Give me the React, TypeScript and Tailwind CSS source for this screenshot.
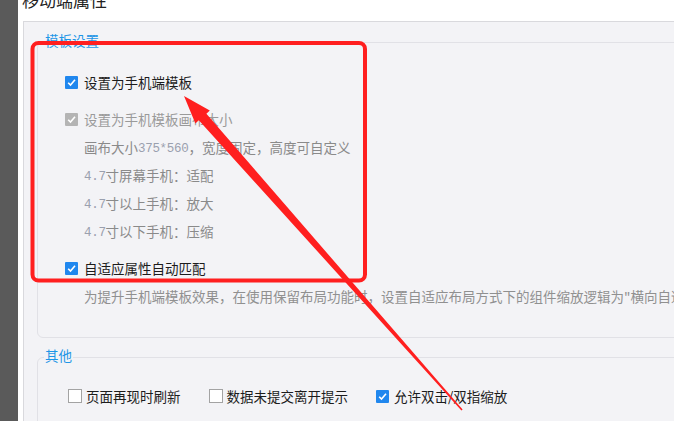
import React from 'react';

type BoxState = 'on' | 'off' | 'disabled';

function Box({ state }: { state: BoxState }) {
  if (state === 'off') {
    return <span className="w-[14px] h-[14px] border border-[#a3a3a3] bg-white shrink-0" />;
  }
  return (
    <span
      className={`w-[13px] h-[13px] rounded-[1px] flex items-center justify-center shrink-0 ${
        state === 'on' ? 'bg-[#2087ee]' : 'bg-[#b4b4b4]'
      }`}
    >
      <svg width="11" height="11" viewBox="0 0 11 11">
        <path d="M2.2 5.7 L4.5 8.1 L9 2.8" stroke="white" strokeWidth="1.6" fill="none" />
      </svg>
    </span>
  );
}

function CheckRow({ state, label, dim }: { state: BoxState; label: string; dim?: boolean }) {
  return (
    <div className="h-[28px] flex items-center gap-[6px]">
      <Box state={state} />
      <span className={dim ? 'text-[#9a9a9a]' : 'text-[#1c1c1c]'}>{label}</span>
    </div>
  );
}

// 数字部分是等宽字体
function Num({ children }: { children: React.ReactNode }) {
  return (
    <span className="relative top-[2px] font-['Liberation_Mono',monospace] text-[12.5px] tracking-[-0.3px] text-[#9aa0ae]">
      {children}
    </span>
  );
}

function SubLine({ children }: { children: React.ReactNode }) {
  return <div className="h-[28px] flex items-center pl-[19px] text-[#8a8a8a] whitespace-nowrap">{children}</div>;
}

// 红色标注框和箭头
function Annotation() {
  return (
    <svg className="absolute inset-0 pointer-events-none" width="674" height="421" viewBox="0 0 674 421">
      <rect x="32.5" y="43" width="332.5" height="237.5" rx="6" fill="none" stroke="#ff1f1f" strokeWidth="4" />
      <polygon
        points="184,96 209.8,110.6 206.4,113.8 462.6,409.5 461.4,410.5 198.8,120.2 195.4,123.4"
        fill="#ff1f1f"
      />
    </svg>
  );
}

export default function App() {
  return (
    <div className="relative w-[674px] h-[421px] overflow-hidden flex bg-white font-['Noto_Sans_CJK_SC','Noto_Sans',sans-serif] text-[13.5px]">
      <div className="w-[18px] shrink-0 bg-[#5a5a5a]" />
      <div className="flex-1 min-w-0 flex flex-col">
        <div className="h-[21px] pl-[4px] overflow-hidden shrink-0">
          <div className="-mt-[9px] text-[17px] leading-[17px] text-[#222]">移动端属性</div>
        </div>
        <div className="flex-1 flex pl-[5px]">
          <div className="flex-1 min-w-0 overflow-hidden border-l border-t border-[#d9d9dd] bg-[#f3f3f6] pl-[13px]">
            <fieldset className="w-[700px] mt-[9px] border border-[#e1e1e6] rounded-[6px] p-0 pb-[27px]">
              <legend className="ml-[6px] px-[1px] pb-[4px] leading-[18px] text-[#1e96e6]">模板设置</legend>
              <div className="pl-[27px] pt-[15px]">
                <CheckRow state="on" label="设置为手机端模板" />
                <div className="mt-[9px]">
                  <CheckRow state="disabled" label="设置为手机模板画布大小" dim />
                </div>
                <SubLine>
                  画布大小<Num>375*560</Num>，宽度固定，高度可自定义
                </SubLine>
                <SubLine>
                  <Num>4.7</Num>寸屏幕手机：适配
                </SubLine>
                <SubLine>
                  <Num>4.7</Num>寸以上手机：放大
                </SubLine>
                <SubLine>
                  <Num>4.7</Num>寸以下手机：压缩
                </SubLine>
                <div className="mt-[9px]">
                  <CheckRow state="on" label="自适应属性自动匹配" />
                </div>
                <div className="h-[28px] flex items-center pl-[19px] text-[#909090] whitespace-nowrap">
                  为提升手机端模板效果，在使用保留布局功能时，设置自适应布局方式下的组件缩放逻辑为"横向自适应"
                </div>
              </div>
            </fieldset>
            <fieldset className="w-[700px] mt-[8px] border border-[#e1e1e6] rounded-[6px] p-0 pb-[20px]">
              <legend className="ml-[6px] px-[1px] pb-[4px] leading-[18px] text-[#1e96e6]">其他</legend>
              <div className="pl-[30px] pt-[14px] flex gap-[28px]">
                <div className="h-[28px] flex items-center gap-[4px]">
                  <Box state="off" />
                  <span className="text-[#1c1c1c]">页面再现时刷新</span>
                </div>
                <div className="h-[28px] flex items-center gap-[4px]">
                  <Box state="off" />
                  <span className="text-[#1c1c1c]">数据未提交离开提示</span>
                </div>
                <div className="h-[28px] flex items-center gap-[5px]">
                  <Box state="on" />
                  <span className="text-[#1c1c1c]">允许双击/双指缩放</span>
                </div>
              </div>
            </fieldset>
          </div>
        </div>
      </div>
      <Annotation />
    </div>
  );
}
